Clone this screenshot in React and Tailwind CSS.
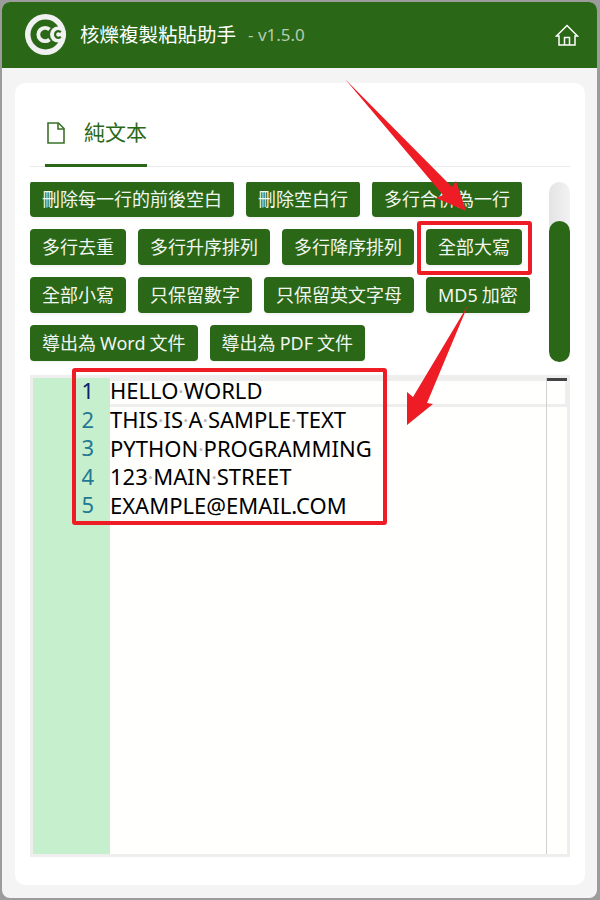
const row = 'font-["Noto_Sans","Noto_Sans_CJK_TC",sans-serif]';

const buttons = [
    '刪除每一行的前後空白', '刪除空白行', '多行合併為一行',
    '多行去重', '多行升序排列', '多行降序排列', '全部大寫',
    '全部小寫', '只保留數字', '只保留英文字母', 'MD5 加密',
    '導出為 Word 文件', '導出為 PDF 文件',
];

const lines = [
    ['HELLO', 'WORLD'],
    ['THIS', 'IS', 'A', 'SAMPLE', 'TEXT'],
    ['PYTHON', 'PROGRAMMING'],
    ['123', 'MAIN', 'STREET'],
    ['EXAMPLE@EMAIL.COM'],
];

function Logo() {
    return (
        <svg width="42" height="42" viewBox="0 0 42 42" className="shrink-0">
            <circle cx="20.5" cy="20.500" r="20.5" fill="#f1f1f1"/>
            <circle cx="20.5" cy="20.500" r="15" fill="#2a6717"/>
            <path d="M24.500 15.500a6.700 6.700 0 1 0 0 10" fill="none" stroke="#f1f1f1" strokeWidth="3.800"/>
            <circle cx="33" cy="20.500" r="8" fill="#f1f1f1"/>
            <path d="M35.800 18.300a3.300 3.300 0 1 0 0 4.400" fill="none" stroke="#2a6717" strokeWidth="2.200"/>
        </svg>
    );
}

function Line({words}) {
    return words.map((word, i) => (
        <span key={i}>
            {i > 0 && <span className="text-[#b5b5b5] -mx-[0.25px]">·</span>}
            {word}
        </span>
    ));
}

export default function App() {
    return (
        <div className={`${row} relative w-[600px] h-[900px] overflow-hidden bg-[#9c9c9c] p-[2px] pr-[3px]`}>
            <div className="flex flex-col h-full rounded-[8px] overflow-hidden bg-[#f4f4f4]">
                {/* Header */}
                <header className="flex items-center h-[66px] shrink-0 bg-[#2a6717] pl-[23px] pr-[18px]">
                    <Logo/>
                    <span className="ml-[13px] text-[19.5px] text-white whitespace-nowrap">核爍複製粘貼助手</span>
                    <span className="ml-[12px] text-[17px] text-[#b7cbb0] whitespace-nowrap">- v1.5.0</span>
                    <svg width="24" height="24" viewBox="0 0 24 24" className="ml-auto" fill="none" stroke="#fff" strokeWidth="1.5">
                        <path d="M1.500 13 12 2.500 22.500 13h-2.500v9H4v-9z"/>
                        <path d="M9.500 22v-7.500h5V22"/>
                    </svg>
                </header>

                <main className="flex-1 pt-[15px] pl-[13px] pr-[12px] pb-[13px]">
                    <div className="flex flex-col h-full rounded-[10px] bg-white px-[15px]">
                        {/* Tab */}
                        <div className="h-[84px] shrink-0 border-b border-[#ebebeb] pl-[15px]">
                            <div className="flex items-center w-[102px] h-[84px] border-b-[3px] border-[#2a6717] pt-[19px] text-[21px] text-[#2a6717]">
                                <svg width="18" height="22" viewBox="0 0 18 22" className="ml-[2px]" fill="none" stroke="#3a7229" strokeWidth="1.6">
                                    <path d="M1 1h10.500L17 6.500V21H1z"/>
                                    <path d="M11 1v6h6"/>
                                </svg>
                                <span className="ml-[19px] whitespace-nowrap">純文本</span>
                            </div>
                        </div>

                        {/* Action buttons */}
                        <div className="flex h-[180px] shrink-0 mt-[15px]">
                            <div className="w-[519px] overflow-hidden">
                                <div className="flex flex-wrap gap-x-[12px] gap-y-[12px] -mt-[1px]">
                                    {buttons.map((label) => (
                                        <button key={label} className="h-[36px] px-[12px] rounded-[4px] bg-[#2a6717] text-[18px] text-[#f2f6f0] whitespace-nowrap [word-spacing:-0.6px] shadow-[0_2px_3px_rgba(0,0,0,0.06)]">
                                            {label}
                                        </button>
                                    ))}
                                </div>
                            </div>
                            <div className="w-[21px] h-full rounded-full bg-gradient-to-r from-[#e4e4e4] to-[#f2f2f2] pt-[39px]">
                                <div className="h-full rounded-full bg-[#2a6717]"/>
                            </div>
                        </div>

                        {/* Editor */}
                        <div className="relative flex h-[482px] shrink-0 mt-[13px] border-[3px] border-[#eeeeee] bg-[#fffffe]">
                            <div className="w-[77px] shrink-0 bg-[#c6efce] text-[22px] text-[#237893] text-right pr-[16px]">
                                <div className="-mt-[2px]">
                                    {lines.map((_, i) => (
                                        <div key={i} className={`h-[28.5px] leading-[28.5px] ${i === 0 ? 'text-[#0b216f]' : ''}`}>{i + 1}</div>
                                    ))}
                                </div>
                            </div>
                            <div className="flex-1 text-[22px] text-black">
                                {lines.map((words, i) => i === 0 ? (
                                    <div key={i} className="h-[29px] leading-[19px] whitespace-nowrap border-y-[3px] border-r-[2px] border-[#eeeeee]">
                                        <Line words={words}/>
                                    </div>
                                ) : (
                                    <div key={i} className="h-[28.5px] leading-[24.5px] whitespace-nowrap">
                                        <Line words={words}/>
                                    </div>
                                ))}
                            </div>
                            <div className="absolute top-0 bottom-0 left-[513px] w-px bg-[#d0d0d0]"/>
                            <div className="absolute top-0 left-[514px] w-[20px] h-[3px] bg-[#444444]"/>
                        </div>
                    </div>
                </main>
            </div>

            {/* Annotations */}
            <div className="absolute left-[417px] top-[221px] w-[115px] h-[54px] rounded-[3px] border-[4px] border-[#ee1c25]"/>
            <div className="absolute left-[72px] top-[368px] w-[315px] h-[157px] rounded-[3px] border-[4px] border-[#ee1c25]"/>
            <svg width="600" height="900" viewBox="0 0 600 900" className="absolute inset-0 pointer-events-none" fill="#ee1c25">
                <path d="M345 79 452 187 456 181 466 211 436 198 443 195z"/>
                <path d="M468 305 427 403 433 404 407 425 407 392 413 397z"/>
            </svg>
        </div>
    );
}
